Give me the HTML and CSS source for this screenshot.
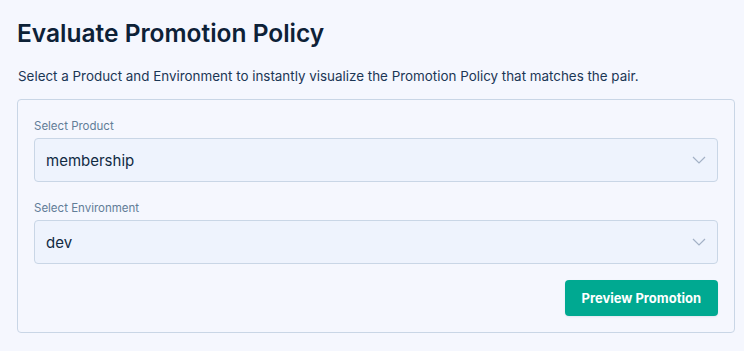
FILE: index.html
```html
<!DOCTYPE html>
<html lang="en-us">
<head>
    <meta charset="utf-8">
    <title>Evaluate Promotion Policy</title>
    <link rel="stylesheet" href="styles.css">
</head>
<body>
    <main class="page">
        <h1 class="title">Evaluate Promotion Policy</h1>
        <p class="intro">Select a Product and Environment to instantly visualize the Promotion Policy that matches the pair.</p>

        <form class="card">
            <div class="field">
                <label class="field-label" for="product">Select Product</label>
                <div class="select" id="product">
                    <span class="select-value">membership</span>
                    <svg class="chevron" width="14" height="8" viewBox="0 0 14 8"><path d="M1 1l6 6 6-6" fill="none" stroke="#a3b1c6" stroke-width="1.2"/></svg>
                </div>
            </div>

            <div class="field">
                <label class="field-label" for="environment">Select Environment</label>
                <div class="select" id="environment">
                    <span class="select-value">dev</span>
                    <svg class="chevron" width="14" height="8" viewBox="0 0 14 8"><path d="M1 1l6 6 6-6" fill="none" stroke="#a3b1c6" stroke-width="1.2"/></svg>
                </div>
            </div>

            <div class="actions">
                <button class="button" type="button">Preview Promotion</button>
            </div>
        </form>
    </main>
</body>
</html>
```

FILE: styles.css
```css
body {
    margin: 0;
    background: #f5f7fe;
    font-family: Inter, "Noto Sans", sans-serif;
    color: #102a43;
}
.page {
    padding: 18px 9px 0 17px;
}
.title {
    margin: 0;
    font-size: 24.5px;
    font-weight: 600;
    line-height: 30px;
    color: #0d2137;
}
.intro {
    margin: 18px 0 0 1px;
    font-size: 13.4px;
    line-height: 20px;
    color: #1b3655;
}
.card {
    margin-top: 13px;
    border: 1px solid #c9d6e6;
    border-radius: 4px;
    padding: 19px 16px 16px;
    display: flex;
    flex-direction: column;
}
.field {
    display: flex;
    flex-direction: column;
}
.field + .field {
    margin-top: 19px;
}
.field-label {
    font-size: 11.5px;
    line-height: 14px;
    color: #627d98;
    margin-bottom: 5px;
}
.select {
    height: 42px;
    background: #eef3fd;
    border: 1px solid #c9d6e6;
    border-radius: 4px;
    display: flex;
    align-items: center;
    justify-content: space-between;
    padding: 0 12px 0 11px;
}
.select-value {
    font-size: 15px;
    color: #102a43;
}
.chevron {
    margin-right: -1px;
}
.actions {
    display: flex;
    justify-content: flex-end;
    margin-top: 16px;
}
.button {
    height: 36px;
    padding: 0 17px;
    border: none;
    border-radius: 4px;
    background: #00a991;
    color: #fff;
    font-family: inherit;
    font-size: 13px;
    font-weight: 700;
    box-shadow: 0 1px 2px rgba(16, 42, 67, 0.08);
}
```
